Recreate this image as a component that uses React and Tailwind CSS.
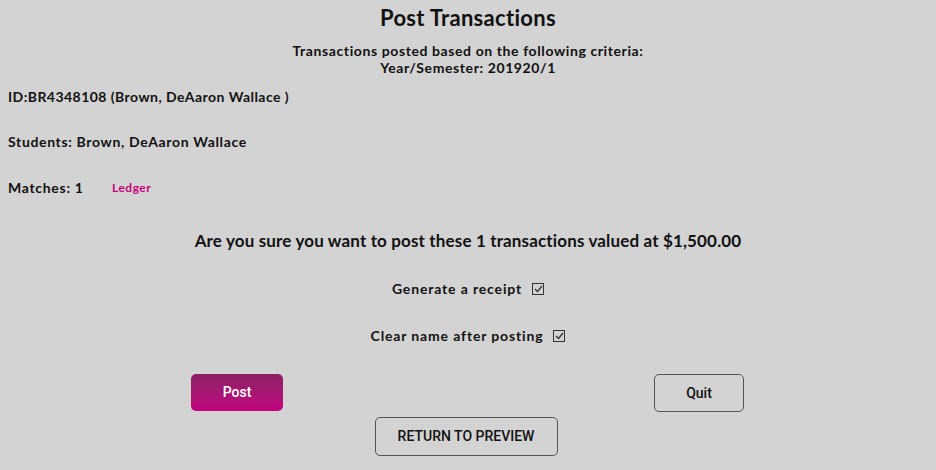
export default function App() {
  const font = { fontFamily: '"Lato", "Open Sans", sans-serif' };
  const roboto = { fontFamily: 'Roboto, sans-serif' };
  const Check = () => (
    <span className="inline-flex h-[12px] w-[12px] items-center justify-center border border-[#333]">
      <svg width="9" height="8" viewBox="0 0 9 8" fill="none">
        <path d="M1 4 L3.5 6.5 L8 1" stroke="#333" strokeWidth="1.3" />
      </svg>
    </span>
  );
  return (
    <div className="h-[470px] w-[936px] bg-[#d3d3d3] text-[#111]" style={font}>
      <div className="pt-[5px] text-center text-[22px] font-bold leading-[26px] tracking-[0.3px]">Post Transactions</div>
      <div className="mt-[11px] text-center text-[14px] font-bold leading-[17px] tracking-[0.6px]">
        <div>Transactions posted based on the following criteria:</div>
        <div>Year/Semester: 201920/1</div>
      </div>
      <div className="px-[8px] text-[14px] font-bold">
        <div className="mt-[12px] leading-[17px] tracking-[0.45px]">ID:BR4348108 (Brown, DeAaron Wallace )</div>
        <div className="mt-[28px] leading-[17px] tracking-[0.65px]">Students: Brown, DeAaron Wallace</div>
        <div className="mt-[29px] flex items-center leading-[17px]">
          <span className="w-[104px] tracking-[0.7px]">Matches: 1</span>
          <span className="text-[12px] tracking-[0.5px] text-[#c8007e]">Ledger</span>
        </div>
      </div>
      <div className="mt-[35px] text-center text-[17px] font-bold leading-[20px] tracking-[0.15px]">
        Are you sure you want to post these 1 transactions valued at $1,500.00
      </div>
      <div className="mt-[29px] flex items-center justify-center gap-[10px] text-[14px] font-bold leading-[17px] tracking-[0.85px]">
        <span>Generate a receipt</span>
        <Check />
      </div>
      <div className="mt-[30px] flex items-center justify-center gap-[10px] text-[14px] font-bold leading-[17px] tracking-[0.85px]">
        <span>Clear name after posting</span>
        <Check />
      </div>
      <div className="mt-[30px] grid grid-cols-2">
        <div className="flex justify-center pl-[6px]">
          <button className="h-[37px] w-[92px] rounded-[5px] bg-gradient-to-b from-[#8b1e64] to-[#c2007f] text-[14px] font-medium text-white" style={roboto}>
            Post
          </button>
        </div>
        <div className="flex justify-center pr-[6px]">
          <button className="h-[38px] w-[90px] rounded-[5px] border border-[#555] text-[14px] font-medium text-[#111]" style={roboto}>
            Quit
          </button>
        </div>
      </div>
      <div className="mt-[5px] flex justify-center pr-[4px]">
        <button className="h-[39px] w-[183px] rounded-[5px] border border-[#555] text-[14px] font-medium text-[#111]" style={roboto}>
          RETURN TO PREVIEW
        </button>
      </div>
    </div>
  );
}
